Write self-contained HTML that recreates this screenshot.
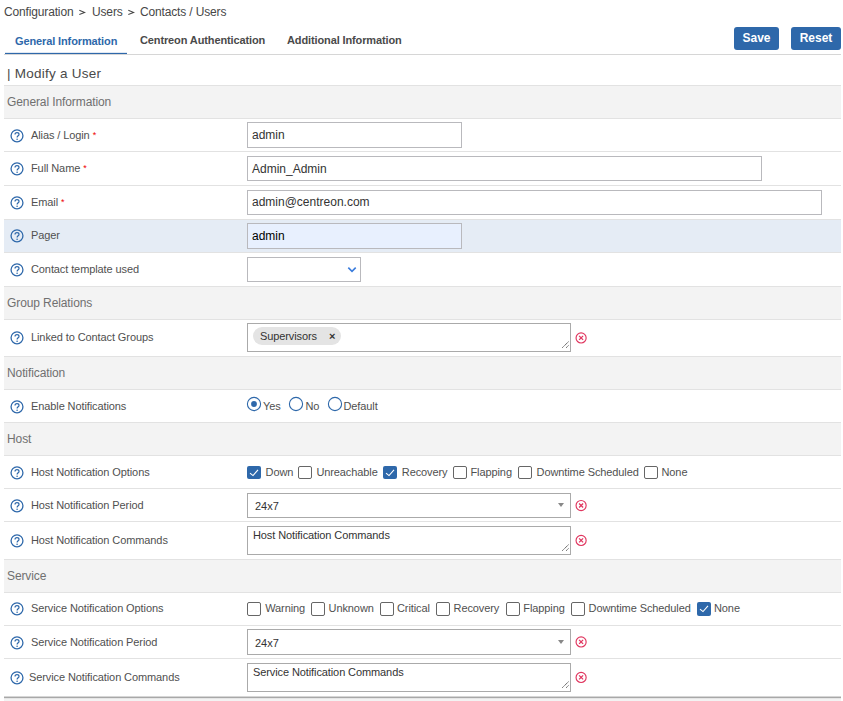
<!DOCTYPE html>
<html><head><meta charset="utf-8">
<style>
*{box-sizing:border-box;margin:0;padding:0}
html,body{width:843px;height:701px;overflow:hidden;background:#fff}
body{font-family:"Liberation Sans",sans-serif;color:#4d4d4d;position:relative}
.a{position:absolute;white-space:nowrap}
.tab{font-size:11px;font-weight:bold;color:#4a4a4a;letter-spacing:-0.12px}
.btn{background:#2e68aa;color:#fff;font-size:12px;font-weight:bold;border-radius:3px;text-align:center}
.ln{position:absolute;left:4px;width:837px;height:1px;background:#e2e2e2}
.bg{position:absolute;left:4px;width:837px}
.t{font-size:12px;color:#707070;letter-spacing:-0.1px}
.lbl{font-size:11px;color:#505050;letter-spacing:-0.1px}
.req{color:#e00;font-size:9px;position:relative;top:-1px;margin-left:3px}
.inp{position:absolute;border:1px solid #b9b9bd;background:#fff;font-size:12px;color:#333}
</style></head><body>
<div class="a" style="left:4px;top:5px;font-size:12px;color:#474747;letter-spacing:-0.1px;letter-spacing:-0.15px">Configuration</div>
<svg class="a" style="left:78px;top:9px" width="8" height="7" viewBox="0 0 8 7"><path d="M1.3 1.3L6.7 3.45L1.3 5.5" fill="none" stroke="#474747" stroke-width="1.05"/></svg>
<div class="a" style="left:92px;top:5px;font-size:12px;color:#474747;letter-spacing:-0.1px;letter-spacing:-0.15px">Users</div>
<svg class="a" style="left:127px;top:9px" width="8" height="7" viewBox="0 0 8 7"><path d="M1.3 1.3L6.7 3.45L1.3 5.5" fill="none" stroke="#474747" stroke-width="1.05"/></svg>
<div class="a" style="left:140px;top:5px;font-size:12px;color:#474747;letter-spacing:-0.1px;letter-spacing:-0.15px">Contacts / Users</div>
<div class="a tab" style="left:15px;top:35px;color:#2e68aa">General Information</div>
<div class="a tab" style="left:140px;top:34px">Centreon Authentication</div>
<div class="a tab" style="left:287px;top:34px">Additional Information</div>
<div class="a" style="left:4px;top:54px;width:837px;height:1px;background:#d6d6d6"></div>
<div class="a" style="left:5px;top:53px;width:122px;height:1px;background:#2e68aa"></div>
<div class="a" style="left:5px;top:52px;width:122px;height:1px;background:#2e68aa;opacity:.15"></div>
<div class="a btn" style="left:734px;top:27px;width:45px;height:23px;line-height:23px">Save</div>
<div class="a btn" style="left:791px;top:27px;width:50px;height:23px;line-height:23px">Reset</div>
<div class="a" style="left:7px;top:66px;font-size:13.5px;color:#4a4a4a;letter-spacing:-0.1px;letter-spacing:0.25px">| Modify a User</div>
<div class="bg" style="top:86px;height:32px;background:#f3f3f3"></div>
<div class="bg" style="top:287px;height:32px;background:#f3f3f3"></div>
<div class="bg" style="top:357px;height:32px;background:#f3f3f3"></div>
<div class="bg" style="top:423px;height:32px;background:#f3f3f3"></div>
<div class="bg" style="top:560px;height:32px;background:#f3f3f3"></div>
<div class="bg" style="top:220px;height:32px;background:#e5ecf5"></div>
<div class="ln" style="top:85px"></div>
<div class="ln" style="top:118px"></div>
<div class="ln" style="top:151px"></div>
<div class="ln" style="top:185px"></div>
<div class="ln" style="top:219px"></div>
<div class="ln" style="top:252px"></div>
<div class="ln" style="top:286px"></div>
<div class="ln" style="top:319px"></div>
<div class="ln" style="top:356px"></div>
<div class="ln" style="top:389px"></div>
<div class="ln" style="top:422px"></div>
<div class="ln" style="top:455px"></div>
<div class="ln" style="top:488px"></div>
<div class="ln" style="top:521px"></div>
<div class="ln" style="top:559px"></div>
<div class="ln" style="top:592px"></div>
<div class="ln" style="top:625px"></div>
<div class="ln" style="top:658px"></div>
<div class="ln" style="top:696px;background:#d6d6d6"></div>
<div class="ln" style="top:697px;background:#a8a8a8"></div>
<div class="ln" style="top:698px;background:#e6e6e6"></div>
<div class="bg" style="top:699px;height:2px;background:#f3f3f3"></div>
<div class="a t" style="left:7px;top:95px">General Information</div>
<svg class="a" style="top:129px;left:10px" width="14" height="14" viewBox="0 0 14 14"><circle cx="7" cy="6.85" r="5.95" fill="none" stroke="#2e68aa" stroke-width="1.3"/><path d="M5 5.5C5 4.3 5.8 3.6 7 3.6C8.2 3.6 9 4.3 9 5.4C9 6.7 7.1 6.9 7.1 8.5" fill="none" stroke="#2e68aa" stroke-width="1.2"/><circle cx="7.1" cy="10.3" r="0.8" fill="#2e68aa"/></svg>
<div class="a lbl" style="left:31px;top:129px">Alias / Login<span class="req">*</span></div>
<div class="inp" style="top:122px;left:247px;width:215px;height:26px"></div>
<div class="a" style="left:252px;top:128px;font-size:12px;color:#333;letter-spacing:-0.1px;letter-spacing:0">admin</div>
<svg class="a" style="top:162px;left:10px" width="14" height="14" viewBox="0 0 14 14"><circle cx="7" cy="6.85" r="5.95" fill="none" stroke="#2e68aa" stroke-width="1.3"/><path d="M5 5.5C5 4.3 5.8 3.6 7 3.6C8.2 3.6 9 4.3 9 5.4C9 6.7 7.1 6.9 7.1 8.5" fill="none" stroke="#2e68aa" stroke-width="1.2"/><circle cx="7.1" cy="10.3" r="0.8" fill="#2e68aa"/></svg>
<div class="a lbl" style="left:31px;top:162px">Full Name<span class="req">*</span></div>
<div class="inp" style="top:156px;left:247px;width:515px;height:25px"></div>
<div class="a" style="left:252px;top:162px;font-size:12px;color:#333;letter-spacing:-0.1px;letter-spacing:0">Admin_Admin</div>
<svg class="a" style="top:196px;left:10px" width="14" height="14" viewBox="0 0 14 14"><circle cx="7" cy="6.85" r="5.95" fill="none" stroke="#2e68aa" stroke-width="1.3"/><path d="M5 5.5C5 4.3 5.8 3.6 7 3.6C8.2 3.6 9 4.3 9 5.4C9 6.7 7.1 6.9 7.1 8.5" fill="none" stroke="#2e68aa" stroke-width="1.2"/><circle cx="7.1" cy="10.3" r="0.8" fill="#2e68aa"/></svg>
<div class="a lbl" style="left:31px;top:196px">Email<span class="req">*</span></div>
<div class="inp" style="top:190px;left:247px;width:575px;height:25px"></div>
<div class="a" style="left:252px;top:195px;font-size:12px;color:#333;letter-spacing:-0.1px;letter-spacing:0">admin@centreon.com</div>
<svg class="a" style="top:229px;left:10px" width="14" height="14" viewBox="0 0 14 14"><circle cx="7" cy="6.85" r="5.95" fill="none" stroke="#2e68aa" stroke-width="1.3"/><path d="M5 5.5C5 4.3 5.8 3.6 7 3.6C8.2 3.6 9 4.3 9 5.4C9 6.7 7.1 6.9 7.1 8.5" fill="none" stroke="#2e68aa" stroke-width="1.2"/><circle cx="7.1" cy="10.3" r="0.8" fill="#2e68aa"/></svg>
<div class="a lbl" style="left:31px;top:229px">Pager</div>
<div class="inp" style="top:223px;left:247px;width:215px;height:26px;background:#e8f0fe"></div>
<div class="a" style="left:252px;top:229px;font-size:12px;color:#000;letter-spacing:-0.1px;letter-spacing:0">admin</div>
<svg class="a" style="top:263px;left:10px" width="14" height="14" viewBox="0 0 14 14"><circle cx="7" cy="6.85" r="5.95" fill="none" stroke="#2e68aa" stroke-width="1.3"/><path d="M5 5.5C5 4.3 5.8 3.6 7 3.6C8.2 3.6 9 4.3 9 5.4C9 6.7 7.1 6.9 7.1 8.5" fill="none" stroke="#2e68aa" stroke-width="1.2"/><circle cx="7.1" cy="10.3" r="0.8" fill="#2e68aa"/></svg>
<div class="a lbl" style="left:31px;top:263px">Contact template used</div>
<div class="inp" style="top:257px;left:247px;width:114px;height:25px"></div>
<svg class="a" style="top:266px;left:347px" width="10" height="7" viewBox="0 0 10 7"><path d="M1.3 1.6L5 5.3L8.7 1.6" fill="none" stroke="#3b7ddd" stroke-width="1.6"/></svg>
<div class="a t" style="left:7px;top:296px">Group Relations</div>
<svg class="a" style="top:331px;left:10px" width="14" height="14" viewBox="0 0 14 14"><circle cx="7" cy="6.85" r="5.95" fill="none" stroke="#2e68aa" stroke-width="1.3"/><path d="M5 5.5C5 4.3 5.8 3.6 7 3.6C8.2 3.6 9 4.3 9 5.4C9 6.7 7.1 6.9 7.1 8.5" fill="none" stroke="#2e68aa" stroke-width="1.2"/><circle cx="7.1" cy="10.3" r="0.8" fill="#2e68aa"/></svg>
<div class="a lbl" style="left:31px;top:331px">Linked to Contact Groups</div>
<div class="inp" style="top:323px;left:247px;width:324px;height:29px;border-color:#aaa"></div>
<div class="a" style="top:327px;left:253px;width:88px;height:18px;border-radius:9px;background:#e4e4e4"></div>
<div class="a" style="left:260px;top:330px;font-size:11px;color:#333;letter-spacing:-0.1px;">Supervisors</div>
<div class="a" style="top:330px;left:329px;font-size:11px;font-weight:bold;color:#333">&#215;</div>
<svg class="a" style="top:330px;left:574px" width="14" height="14" viewBox="0 0 14 14"><circle cx="7.100000000000023" cy="7.899999999999977" r="5.05" fill="none" stroke="#e0365f" stroke-width="1.15"/><path d="M5.100000000000023 5.899999999999977L9.100000000000023 9.899999999999977M9.100000000000023 5.899999999999977L5.100000000000023 9.899999999999977" stroke="#e0365f" stroke-width="1.3"/></svg>
<div class="a t" style="left:7px;top:366px">Notification</div>
<svg class="a" style="top:400px;left:10px" width="14" height="14" viewBox="0 0 14 14"><circle cx="7" cy="6.85" r="5.95" fill="none" stroke="#2e68aa" stroke-width="1.3"/><path d="M5 5.5C5 4.3 5.8 3.6 7 3.6C8.2 3.6 9 4.3 9 5.4C9 6.7 7.1 6.9 7.1 8.5" fill="none" stroke="#2e68aa" stroke-width="1.2"/><circle cx="7.1" cy="10.3" r="0.8" fill="#2e68aa"/></svg>
<div class="a lbl" style="left:31px;top:400px">Enable Notifications</div>
<div class="a t" style="left:7px;top:432px">Host</div>
<svg class="a" style="top:466px;left:10px" width="14" height="14" viewBox="0 0 14 14"><circle cx="7" cy="6.85" r="5.95" fill="none" stroke="#2e68aa" stroke-width="1.3"/><path d="M5 5.5C5 4.3 5.8 3.6 7 3.6C8.2 3.6 9 4.3 9 5.4C9 6.7 7.1 6.9 7.1 8.5" fill="none" stroke="#2e68aa" stroke-width="1.2"/><circle cx="7.1" cy="10.3" r="0.8" fill="#2e68aa"/></svg>
<div class="a lbl" style="left:31px;top:466px">Host Notification Options</div>
<svg class="a" style="top:499px;left:10px" width="14" height="14" viewBox="0 0 14 14"><circle cx="7" cy="6.85" r="5.95" fill="none" stroke="#2e68aa" stroke-width="1.3"/><path d="M5 5.5C5 4.3 5.8 3.6 7 3.6C8.2 3.6 9 4.3 9 5.4C9 6.7 7.1 6.9 7.1 8.5" fill="none" stroke="#2e68aa" stroke-width="1.2"/><circle cx="7.1" cy="10.3" r="0.8" fill="#2e68aa"/></svg>
<div class="a lbl" style="left:31px;top:499px">Host Notification Period</div>
<div class="inp" style="top:493px;left:247px;width:324px;height:25px;border-color:#aaa"></div>
<div class="a" style="left:255px;top:500px;font-size:11px;color:#333;letter-spacing:-0.1px;letter-spacing:0">24x7</div>
<svg class="a" style="top:498px;left:574px" width="14" height="14" viewBox="0 0 14 14"><circle cx="7.100000000000023" cy="7.5" r="5.05" fill="none" stroke="#e0365f" stroke-width="1.15"/><path d="M5.100000000000023 5.5L9.100000000000023 9.5M9.100000000000023 5.5L5.100000000000023 9.5" stroke="#e0365f" stroke-width="1.3"/></svg>
<svg class="a" style="top:534px;left:10px" width="14" height="14" viewBox="0 0 14 14"><circle cx="7" cy="6.85" r="5.95" fill="none" stroke="#2e68aa" stroke-width="1.3"/><path d="M5 5.5C5 4.3 5.8 3.6 7 3.6C8.2 3.6 9 4.3 9 5.4C9 6.7 7.1 6.9 7.1 8.5" fill="none" stroke="#2e68aa" stroke-width="1.2"/><circle cx="7.1" cy="10.3" r="0.8" fill="#2e68aa"/></svg>
<div class="a lbl" style="left:31px;top:534px">Host Notification Commands</div>
<div class="inp" style="top:526px;left:247px;width:324px;height:29px;border-color:#aaa"></div>
<div class="a" style="left:253px;top:529px;font-size:11px;color:#333;letter-spacing:-0.1px;">Host Notification Commands</div>
<svg class="a" style="top:533px;left:574px" width="14" height="14" viewBox="0 0 14 14"><circle cx="7.100000000000023" cy="7.399999999999977" r="5.05" fill="none" stroke="#e0365f" stroke-width="1.15"/><path d="M5.100000000000023 5.399999999999977L9.100000000000023 9.399999999999977M9.100000000000023 5.399999999999977L5.100000000000023 9.399999999999977" stroke="#e0365f" stroke-width="1.3"/></svg>
<div class="a t" style="left:7px;top:569px">Service</div>
<svg class="a" style="top:602px;left:10px" width="14" height="14" viewBox="0 0 14 14"><circle cx="7" cy="6.85" r="5.95" fill="none" stroke="#2e68aa" stroke-width="1.3"/><path d="M5 5.5C5 4.3 5.8 3.6 7 3.6C8.2 3.6 9 4.3 9 5.4C9 6.7 7.1 6.9 7.1 8.5" fill="none" stroke="#2e68aa" stroke-width="1.2"/><circle cx="7.1" cy="10.3" r="0.8" fill="#2e68aa"/></svg>
<div class="a lbl" style="left:31px;top:602px">Service Notification Options</div>
<svg class="a" style="top:636px;left:10px" width="14" height="14" viewBox="0 0 14 14"><circle cx="7" cy="6.85" r="5.95" fill="none" stroke="#2e68aa" stroke-width="1.3"/><path d="M5 5.5C5 4.3 5.8 3.6 7 3.6C8.2 3.6 9 4.3 9 5.4C9 6.7 7.1 6.9 7.1 8.5" fill="none" stroke="#2e68aa" stroke-width="1.2"/><circle cx="7.1" cy="10.3" r="0.8" fill="#2e68aa"/></svg>
<div class="a lbl" style="left:31px;top:636px">Service Notification Period</div>
<div class="inp" style="top:629px;left:247px;width:324px;height:26px;border-color:#aaa"></div>
<div class="a" style="left:255px;top:637px;font-size:11px;color:#333;letter-spacing:-0.1px;letter-spacing:0">24x7</div>
<svg class="a" style="top:634px;left:574px" width="14" height="14" viewBox="0 0 14 14"><circle cx="7.100000000000023" cy="7.899999999999977" r="5.05" fill="none" stroke="#e0365f" stroke-width="1.15"/><path d="M5.100000000000023 5.899999999999977L9.100000000000023 9.899999999999977M9.100000000000023 5.899999999999977L5.100000000000023 9.899999999999977" stroke="#e0365f" stroke-width="1.3"/></svg>
<svg class="a" style="top:671px;left:10px" width="14" height="14" viewBox="0 0 14 14"><circle cx="7" cy="6.85" r="5.95" fill="none" stroke="#2e68aa" stroke-width="1.3"/><path d="M5 5.5C5 4.3 5.8 3.6 7 3.6C8.2 3.6 9 4.3 9 5.4C9 6.7 7.1 6.9 7.1 8.5" fill="none" stroke="#2e68aa" stroke-width="1.2"/><circle cx="7.1" cy="10.3" r="0.8" fill="#2e68aa"/></svg>
<div class="a lbl" style="left:29px;top:671px">Service Notification Commands</div>
<div class="inp" style="top:663px;left:247px;width:324px;height:29px;border-color:#aaa"></div>
<div class="a" style="left:253px;top:666px;font-size:11px;color:#333;letter-spacing:-0.1px;">Service Notification Commands</div>
<svg class="a" style="top:670px;left:574px" width="14" height="14" viewBox="0 0 14 14"><circle cx="7.100000000000023" cy="7.399999999999977" r="5.05" fill="none" stroke="#e0365f" stroke-width="1.15"/><path d="M5.100000000000023 5.399999999999977L9.100000000000023 9.399999999999977M9.100000000000023 5.399999999999977L5.100000000000023 9.399999999999977" stroke="#e0365f" stroke-width="1.3"/></svg>
<svg class="a" style="left:246px;top:396.4px" width="16" height="16" viewBox="0 0 16 16"><circle cx="8" cy="8" r="6.6" fill="#fff" stroke="#2e68aa" stroke-width="1.1"/><circle cx="8" cy="8" r="2.9" fill="#2e68aa"/></svg>
<div class="a" style="left:263px;top:400px;font-size:11px;color:#505050;letter-spacing:-0.1px;">Yes</div>
<svg class="a" style="left:287.8px;top:396.4px" width="16" height="16" viewBox="0 0 16 16"><circle cx="8" cy="8" r="6.6" fill="#fff" stroke="#2e68aa" stroke-width="1.1"/></svg>
<div class="a" style="left:305.5px;top:400px;font-size:11px;color:#505050;letter-spacing:-0.1px;">No</div>
<svg class="a" style="left:326.9px;top:396.4px" width="16" height="16" viewBox="0 0 16 16"><circle cx="8" cy="8" r="6.6" fill="#fff" stroke="#2e68aa" stroke-width="1.1"/></svg>
<div class="a" style="left:343.5px;top:400px;font-size:11px;color:#505050;letter-spacing:-0.1px;">Default</div>
<div class="a" style="left:247px;top:466px;width:14px;height:13px;background:#2e68aa;border-radius:2px"><svg width="14" height="14" viewBox="0 0 14 14" style="position:absolute;left:0;top:0"><path d="M3 7.1L6 9.6L11 3.8" fill="none" stroke="#fff" stroke-width="1.1"/></svg></div>
<div class="a" style="left:265.6px;top:466px;font-size:11px;color:#505050;letter-spacing:-0.1px;">Down</div>
<div class="a" style="left:298px;top:466px;width:14px;height:13px;border:1px solid #666;border-radius:2px;background:#fff"></div>
<div class="a" style="left:316.4px;top:466px;font-size:11px;color:#505050;letter-spacing:-0.1px;">Unreachable</div>
<div class="a" style="left:383px;top:466px;width:14px;height:13px;background:#2e68aa;border-radius:2px"><svg width="14" height="14" viewBox="0 0 14 14" style="position:absolute;left:0;top:0"><path d="M3 7.1L6 9.6L11 3.8" fill="none" stroke="#fff" stroke-width="1.1"/></svg></div>
<div class="a" style="left:401.8px;top:466px;font-size:11px;color:#505050;letter-spacing:-0.1px;">Recovery</div>
<div class="a" style="left:453px;top:466px;width:14px;height:13px;border:1px solid #666;border-radius:2px;background:#fff"></div>
<div class="a" style="left:470.5px;top:466px;font-size:11px;color:#505050;letter-spacing:-0.1px;">Flapping</div>
<div class="a" style="left:518px;top:466px;width:14px;height:13px;border:1px solid #666;border-radius:2px;background:#fff"></div>
<div class="a" style="left:536.6px;top:466px;font-size:11px;color:#505050;letter-spacing:-0.1px;">Downtime Scheduled</div>
<div class="a" style="left:644px;top:466px;width:14px;height:13px;border:1px solid #666;border-radius:2px;background:#fff"></div>
<div class="a" style="left:661.5px;top:466px;font-size:11px;color:#505050;letter-spacing:-0.1px;">None</div>
<div class="a" style="left:247px;top:602px;width:14px;height:14px;border:1px solid #666;border-radius:2px;background:#fff"></div>
<div class="a" style="left:265.2px;top:602px;font-size:11px;color:#505050;letter-spacing:-0.1px;">Warning</div>
<div class="a" style="left:311px;top:602px;width:14px;height:14px;border:1px solid #666;border-radius:2px;background:#fff"></div>
<div class="a" style="left:328.6px;top:602px;font-size:11px;color:#505050;letter-spacing:-0.1px;">Unknown</div>
<div class="a" style="left:379.5px;top:602px;width:14px;height:14px;border:1px solid #666;border-radius:2px;background:#fff"></div>
<div class="a" style="left:397px;top:602px;font-size:11px;color:#505050;letter-spacing:-0.1px;">Critical</div>
<div class="a" style="left:436px;top:602px;width:14px;height:14px;border:1px solid #666;border-radius:2px;background:#fff"></div>
<div class="a" style="left:453.6px;top:602px;font-size:11px;color:#505050;letter-spacing:-0.1px;">Recovery</div>
<div class="a" style="left:506px;top:602px;width:14px;height:14px;border:1px solid #666;border-radius:2px;background:#fff"></div>
<div class="a" style="left:523.3px;top:602px;font-size:11px;color:#505050;letter-spacing:-0.1px;">Flapping</div>
<div class="a" style="left:571px;top:602px;width:14px;height:14px;border:1px solid #666;border-radius:2px;background:#fff"></div>
<div class="a" style="left:588.6px;top:602px;font-size:11px;color:#505050;letter-spacing:-0.1px;">Downtime Scheduled</div>
<div class="a" style="left:697px;top:602px;width:14px;height:14px;background:#2e68aa;border-radius:2px"><svg width="14" height="14" viewBox="0 0 14 14" style="position:absolute;left:0;top:0"><path d="M3 7.1L6 9.6L11 3.8" fill="none" stroke="#fff" stroke-width="1.1"/></svg></div>
<div class="a" style="left:714px;top:602px;font-size:11px;color:#505050;letter-spacing:-0.1px;">None</div>
<svg class="a" style="left:558px;top:503px" width="6" height="4" viewBox="0 0 6 4"><path d="M0 0H6L3 4Z" fill="#888"/></svg>
<svg class="a" style="left:558px;top:640px" width="6" height="4" viewBox="0 0 6 4"><path d="M0 0H6L3 4Z" fill="#888"/></svg>
<svg class="a" style="left:561px;top:341px" width="9" height="8" viewBox="0 0 9 8"><path d="M1.3 6.7L7.9 0.3M5.2 6.7L7.9 4.1" stroke="#3a3a3a" stroke-width="0.9" stroke-dasharray="1.3 0.5"/></svg>
<svg class="a" style="left:561px;top:544px" width="9" height="8" viewBox="0 0 9 8"><path d="M1.3 6.7L7.9 0.3M5.2 6.7L7.9 4.1" stroke="#3a3a3a" stroke-width="0.9" stroke-dasharray="1.3 0.5"/></svg>
<svg class="a" style="left:561px;top:681px" width="9" height="8" viewBox="0 0 9 8"><path d="M1.3 6.7L7.9 0.3M5.2 6.7L7.9 4.1" stroke="#3a3a3a" stroke-width="0.9" stroke-dasharray="1.3 0.5"/></svg>
</body></html>
